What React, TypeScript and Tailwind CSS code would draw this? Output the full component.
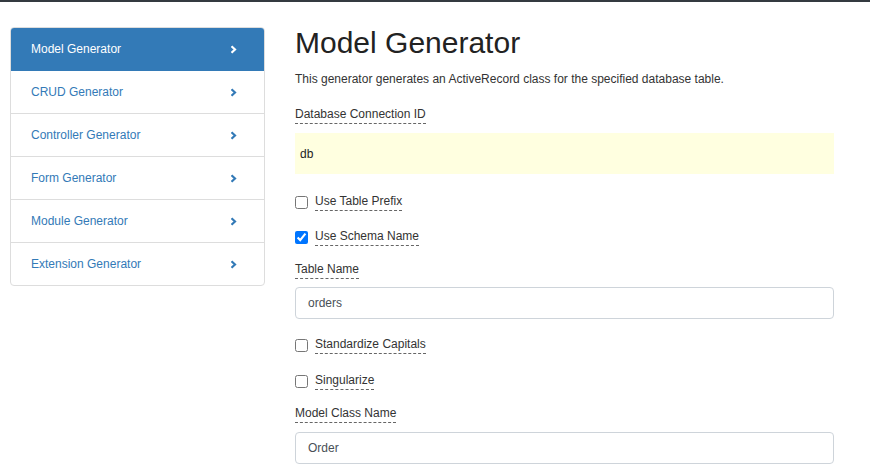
import React from "react";

const items = [
  "Model Generator",
  "CRUD Generator",
  "Controller Generator",
  "Form Generator",
  "Module Generator",
  "Extension Generator",
];

function Chevron({ active }: { active: boolean }) {
  return (
    <svg width="7" height="9" viewBox="0 0 7 9" className="shrink-0">
      <path
        d="M1.5 1.2 L5 4.5 L1.5 7.8"
        fill="none"
        stroke={active ? "#ffffff" : "#337ab7"}
        strokeWidth="2.2"
        strokeLinecap="butt"
        strokeLinejoin="miter"
      />
    </svg>
  );
}

function DashedLabel({ children }: { children: React.ReactNode }) {
  return (
    <span className="block border-b border-dashed border-[#666] leading-[18px] text-[12px] text-[#333]">
      {children}
    </span>
  );
}

function CheckRow({ label, checked, className }: { label: string; checked?: boolean; className: string }) {
  return (
    <div className={"flex items-center " + className}>
      <input
        type="checkbox"
        defaultChecked={checked}
        className="m-0 w-[13px] h-[13px] mt-[1px]"
      />
      <div className="ml-[7px] flex">
        <DashedLabel>{label}</DashedLabel>
      </div>
    </div>
  );
}

export default function App() {
  return (
    <div
      className="w-[870px] h-[473px] bg-white overflow-hidden"
      style={{ fontFamily: '"Liberation Sans", Arial, sans-serif' }}
    >
      <div className="h-[2px] bg-[#343a40]" />
      <div className="flex">
        <div className="ml-[10px] mt-[25px] w-[255px] shrink-0">
          <div className="border border-[#dddddd] rounded-[4px] overflow-hidden">
            {items.map((it, i) => (
              <div
                key={it}
                className={
                  "flex items-center justify-between pl-[20px] pr-[27px] text-[12px] " +
                  (i === 0
                    ? "bg-[#337ab7] text-white h-[43px] border-b border-[#337ab7]"
                    : i === items.length - 1
                    ? "text-[#337ab7] h-[42px]"
                    : "text-[#337ab7] h-[43px] border-b border-[#dddddd]")
                }
              >
                <span>{it}</span>
                <Chevron active={i === 0} />
              </div>
            ))}
          </div>
        </div>
        <div className="ml-[30px] w-[539px] shrink-0">
          <h1 className="mt-[23px] text-[30px] leading-[36px] text-[#222] font-normal">Model Generator</h1>
          <p className="mt-[9px] text-[12px] leading-[18px] text-[#333]">
            This generator generates an ActiveRecord class for the specified database table.
          </p>
          <div className="mt-[17px] flex">
            <DashedLabel>Database Connection ID</DashedLabel>
          </div>
          <div className="mt-[9px] h-[41px] bg-[#ffffe0] flex items-center px-[5px] text-[12px] text-[#222]">
            db
          </div>
          <CheckRow label="Use Table Prefix" className="mt-[18px]" />
          <CheckRow label="Use Schema Name" checked className="mt-[16px]" />
          <div className="mt-[14px] flex">
            <DashedLabel>Table Name</DashedLabel>
          </div>
          <div className="mt-[8px] h-[32px] border border-[#ced4da] rounded-[4px] flex items-center px-[12px] text-[12px] text-[#495057]">
            orders
          </div>
          <CheckRow label="Standardize Capitals" className="mt-[16px]" />
          <CheckRow label="Singularize" className="mt-[17px]" />
          <div className="mt-[14px] flex">
            <DashedLabel>Model Class Name</DashedLabel>
          </div>
          <div className="mt-[9px] h-[32px] border border-[#ced4da] rounded-[4px] flex items-center px-[12px] text-[12px] text-[#495057]">
            Order
          </div>
        </div>
      </div>
    </div>
  );
}
